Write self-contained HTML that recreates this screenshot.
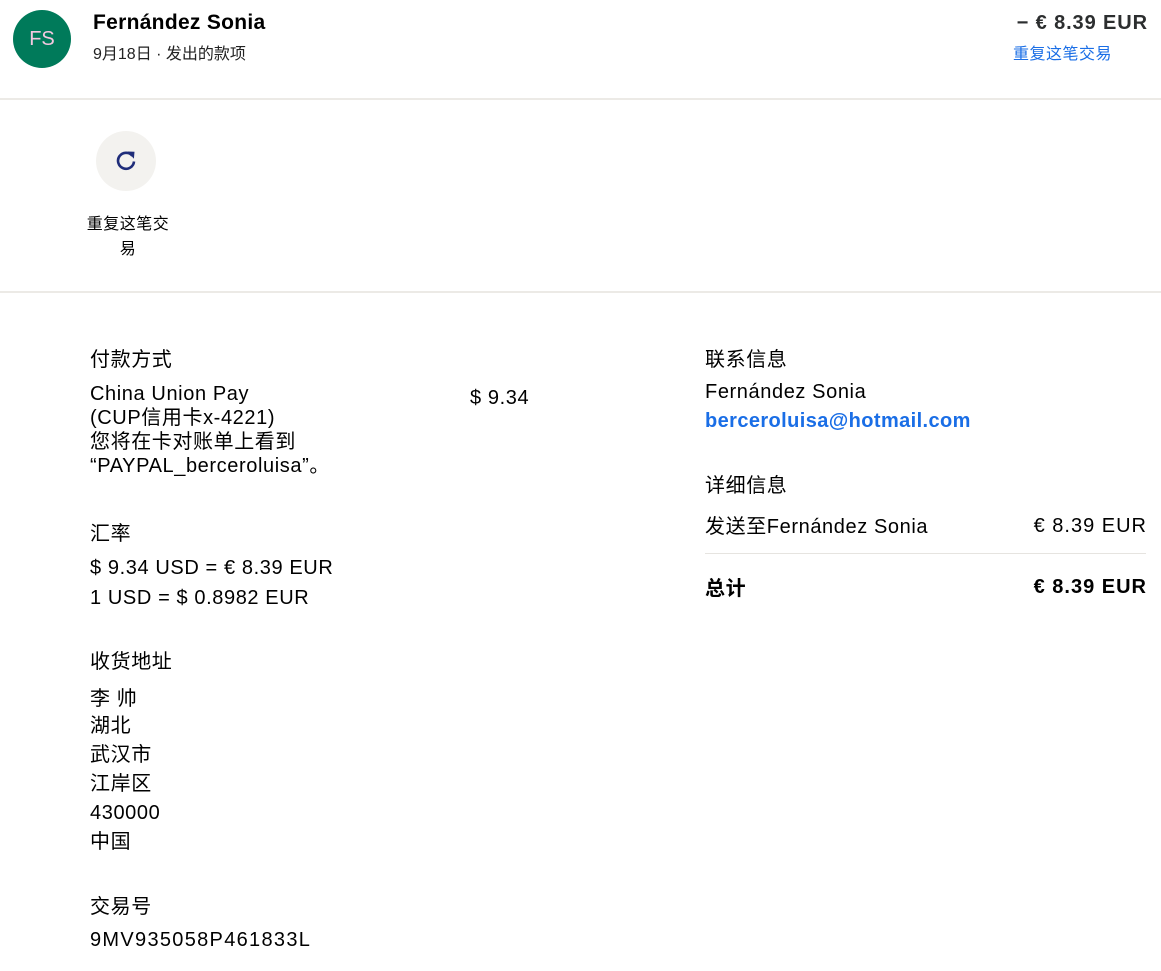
<!DOCTYPE html>
<html><head><meta charset="utf-8"><style>
*{margin:0;padding:0;box-sizing:border-box}
body{width:1161px;height:971px;background:#fff;font-family:"Liberation Sans","Noto Sans CJK SC",sans-serif;color:#000;position:relative;overflow:hidden}
.a{position:absolute;white-space:nowrap}
.av{left:13px;top:10px;width:58px;height:58px;border-radius:50%;background:#007a5a;color:#f4c8e0;font-size:20px;text-align:center;line-height:58px}
.hr{position:absolute;left:0;width:1161px;height:2px;background:#eceae6}
.t{font-size:20px;letter-spacing:0.6px}
.b{font-size:20px;line-height:30px;letter-spacing:0.6px}
</style></head><body>
<div class="a av">FS</div>
<div class="a" style="left:93px;top:11px;font-size:21px;font-weight:bold;letter-spacing:0.3px">Fernández Sonia</div>
<div class="a" style="left:93px;top:40px;font-size:16px;color:#222">9月18日 · 发出的款项</div>
<div class="a" style="right:13px;top:12px;font-size:20px;font-weight:bold;color:#2c2e2f;letter-spacing:0.9px">− € 8.39 EUR</div>
<div class="a" style="left:1013px;top:40px;font-size:16px;color:#1a6ee6;letter-spacing:0.5px">重复这笔交易</div>
<div class="hr" style="top:98px"></div>
<div class="a" style="left:96px;top:131px;width:60px;height:60px;border-radius:50%;background:#f3f2ef"></div>
<svg class="a" style="left:113px;top:148px" width="26" height="26" viewBox="0 0 26 26"><path d="M19.3 7.8A8 8 0 1 0 21 13.5" fill="none" stroke="#1f2d7a" stroke-width="2.6"/><path d="M14.5 3.5l7 .2-.6 7z" fill="#1f2d7a"/></svg>
<div class="a" style="left:80px;top:212px;width:96px;text-align:center;font-size:16px;line-height:25px;white-space:normal;letter-spacing:0.5px">重复这笔交<br>易</div>
<div class="hr" style="top:291px"></div>
<div class="a t" style="left:90px;top:343px">付款方式</div>
<div class="a b" style="left:90px;top:382px;line-height:24px">China Union Pay<br>(CUP信用卡x-4221)<br>您将在卡对账单上看到<br>“PAYPAL_berceroluisa”。</div>
<div class="a t" style="left:470px;top:387px">$ 9.34</div>
<div class="a t" style="left:90px;top:517px">汇率</div>
<div class="a b" style="left:90px;top:553px">$ 9.34 USD = € 8.39 EUR<br>1 USD = $ 0.8982 EUR</div>
<div class="a t" style="left:90px;top:645px">收货地址</div>
<div class="a t" style="left:90px;top:682px">李 帅</div>
<div class="a b" style="left:90px;top:712px;line-height:29px">湖北<br>武汉市<br>江岸区<br>430000<br>中国</div>
<div class="a t" style="left:90px;top:890px">交易号</div>
<div class="a t" style="left:90px;top:929px;letter-spacing:1.3px">9MV935058P461833L</div>
<div class="a t" style="left:705px;top:343px">联系信息</div>
<div class="a t" style="left:705px;top:381px">Fernández Sonia</div>
<div class="a t" style="left:705px;top:410px;color:#1a6ee6;font-weight:bold;letter-spacing:0.4px">berceroluisa@hotmail.com</div>
<div class="a t" style="left:705px;top:469px">详细信息</div>
<div class="a t" style="left:705px;top:510px">发送至Fernández Sonia</div>
<div class="a t" style="right:14px;top:515px;letter-spacing:1px">€ 8.39 EUR</div>
<div class="a" style="left:705px;top:553px;width:441px;height:1px;background:#e6e4e0"></div>
<div class="a t" style="left:705px;top:572px;font-weight:bold">总计</div>
<div class="a t" style="right:14px;top:576px;font-weight:bold;letter-spacing:1px">€ 8.39 EUR</div>
</body></html>
